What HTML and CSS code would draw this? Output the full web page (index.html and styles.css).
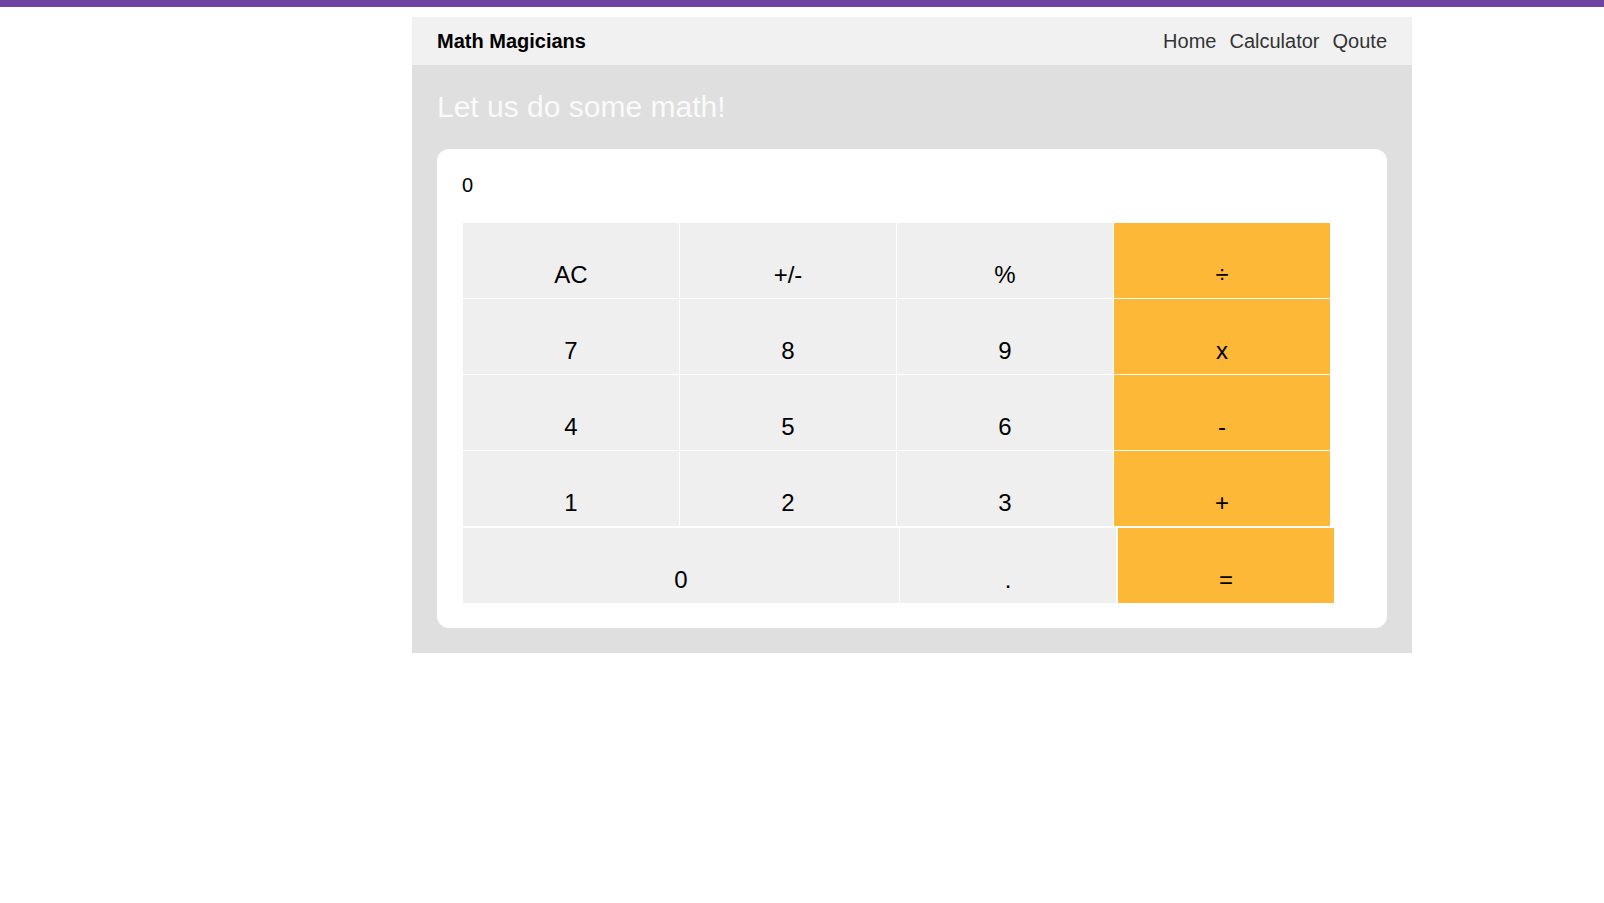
FILE: index.html
```html
<!DOCTYPE html>
<html lang="en">
<head>
<meta charset="utf-8">
<title>Math Magicians</title>
<link rel="stylesheet" href="styles.css">
</head>
<body>
<div class="topbar"></div>
<div class="app">
  <header class="header">
    <h1 class="brand">Math Magicians</h1>
    <nav class="nav">
      <a class="nav-link" href="#">Home</a>
      <a class="nav-link" href="#">Calculator</a>
      <a class="nav-link" href="#">Qoute</a>
    </nav>
  </header>
  <main class="main">
    <h2 class="title">Let us do some math!</h2>
    <section class="card">
      <div class="display">0</div>
      <div class="pad">
        <div class="keys">
          <button class="key">AC</button>
          <button class="key">+/-</button>
          <button class="key">%</button>
          <button class="key op">÷</button>
          <button class="key">7</button>
          <button class="key">8</button>
          <button class="key">9</button>
          <button class="key op">x</button>
          <button class="key">4</button>
          <button class="key">5</button>
          <button class="key">6</button>
          <button class="key op">-</button>
          <button class="key">1</button>
          <button class="key">2</button>
          <button class="key">3</button>
          <button class="key op">+</button>
        </div>
        <div class="last-row">
          <button class="key zero">0</button>
          <button class="key dot">.</button>
          <button class="key op eq">=</button>
        </div>
      </div>
    </section>
  </main>
</div>
</body>
</html>
```

FILE: styles.css
```css
html, body {
  margin: 0;
  padding: 0;
  background: #ffffff;
  font-family: "Liberation Sans", Arial, sans-serif;
}

.topbar {
  height: 7px;
  background: #6f43a2;
}

.app {
  width: 1000px;
  margin: 10px 0 0 412px;
}

.header {
  height: 48px;
  background: #f1f1f1;
  display: flex;
  align-items: center;
  justify-content: space-between;
  padding: 0 25px 0 25px;
}

.brand {
  margin: 0;
  font-size: 20px;
  font-weight: bold;
  color: #000;
}

.nav {
  display: flex;
  gap: 13px;
}

.nav-link {
  font-size: 20px;
  color: #333;
  text-decoration: none;
}

.main {
  background: #dfdfdf;
  padding: 25px;
  display: flex;
  flex-direction: column;
  gap: 25px;
}

.title {
  margin: 0;
  font-size: 30px;
  font-weight: normal;
  color: #fafafa;
  line-height: 34px;
}

.card {
  background: #ffffff;
  border-radius: 12px;
  padding: 25px;
}

.display {
  font-size: 20px;
  line-height: 23px;
  margin-bottom: 26px;
  color: #000;
}

.pad {
  padding-left: 1px;
}

.keys {
  display: grid;
  grid-template-columns: repeat(4, 216px);
  grid-auto-rows: 75px;
  gap: 1px;
  background: #ffffff;
}

.last-row {
  display: flex;
  margin-top: 2px;
  height: 75px;
}

.key {
  border: none;
  margin: 0;
  background: #efefef;
  font-family: "Liberation Sans", Arial, sans-serif;
  font-size: 24px;
  line-height: 28px;
  color: #000;
  padding: 38px 0 9px 0;
  text-align: center;
  display: block;
  height: 75px;
  box-sizing: border-box;
}

.key.op {
  background: #feb838;
}

.zero {
  width: 436px;
}

.dot {
  width: 216px;
  margin-left: 1px;
}

.eq {
  width: 216px;
  margin-left: 2px;
}
```
